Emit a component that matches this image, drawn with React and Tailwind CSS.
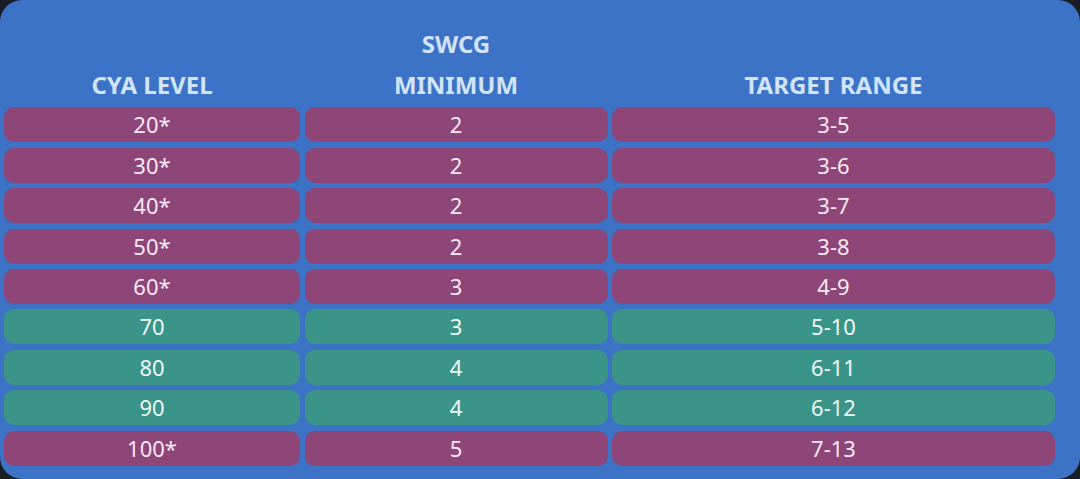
const rows = [
  { level: "20*", min: "2", range: "3-5", tone: "purple" },
  { level: "30*", min: "2", range: "3-6", tone: "purple" },
  { level: "40*", min: "2", range: "3-7", tone: "purple" },
  { level: "50*", min: "2", range: "3-8", tone: "purple" },
  { level: "60*", min: "3", range: "4-9", tone: "purple" },
  { level: "70", min: "3", range: "5-10", tone: "teal" },
  { level: "80", min: "4", range: "6-11", tone: "teal" },
  { level: "90", min: "4", range: "6-12", tone: "teal" },
  { level: "100*", min: "5", range: "7-13", tone: "purple" },
];

const Cell = ({ tone, children }) => (
  <div
    className={
      (tone === "teal" ? "bg-[#3a9588] text-[#eef8f5]" : "bg-[#8e4577] text-[#f8e9f3]") +
      " h-[35px] rounded-[10px] flex items-center justify-center text-[22px]"
    }
  >
    {children}
  </div>
);

const Head = ({ children }) => (
  <div className="h-[77px] flex flex-col items-center justify-end text-[24px] font-bold text-[#d3e3fa] leading-[41px] [&>span:last-child]:-mb-[3px]">
    {children}
  </div>
);

export default function App() {
  return (
    <div className="w-[1080px] h-[479px] bg-[#1a1d24] overflow-hidden" style={{ fontFamily: '"Noto Sans", "Open Sans", sans-serif' }}>
      <div className="w-full h-full bg-[#3c73c6] rounded-[22px] pt-[25px] pl-[4px] overflow-hidden">
        <div className="grid grid-cols-[296px_303px_443px] gap-x-[4.5px] gap-y-[5.4px]">
          <Head>
            <span>CYA LEVEL</span>
          </Head>
          <Head>
            <span>SWCG</span>
            <span>MINIMUM</span>
          </Head>
          <Head>
            <span>TARGET RANGE</span>
          </Head>
          {rows.map((r) => (
            <div key={r.level} className="contents">
              <Cell tone={r.tone}>{r.level}</Cell>
              <Cell tone={r.tone}>{r.min}</Cell>
              <Cell tone={r.tone}>{r.range}</Cell>
            </div>
          ))}
        </div>
      </div>
    </div>
  );
}
